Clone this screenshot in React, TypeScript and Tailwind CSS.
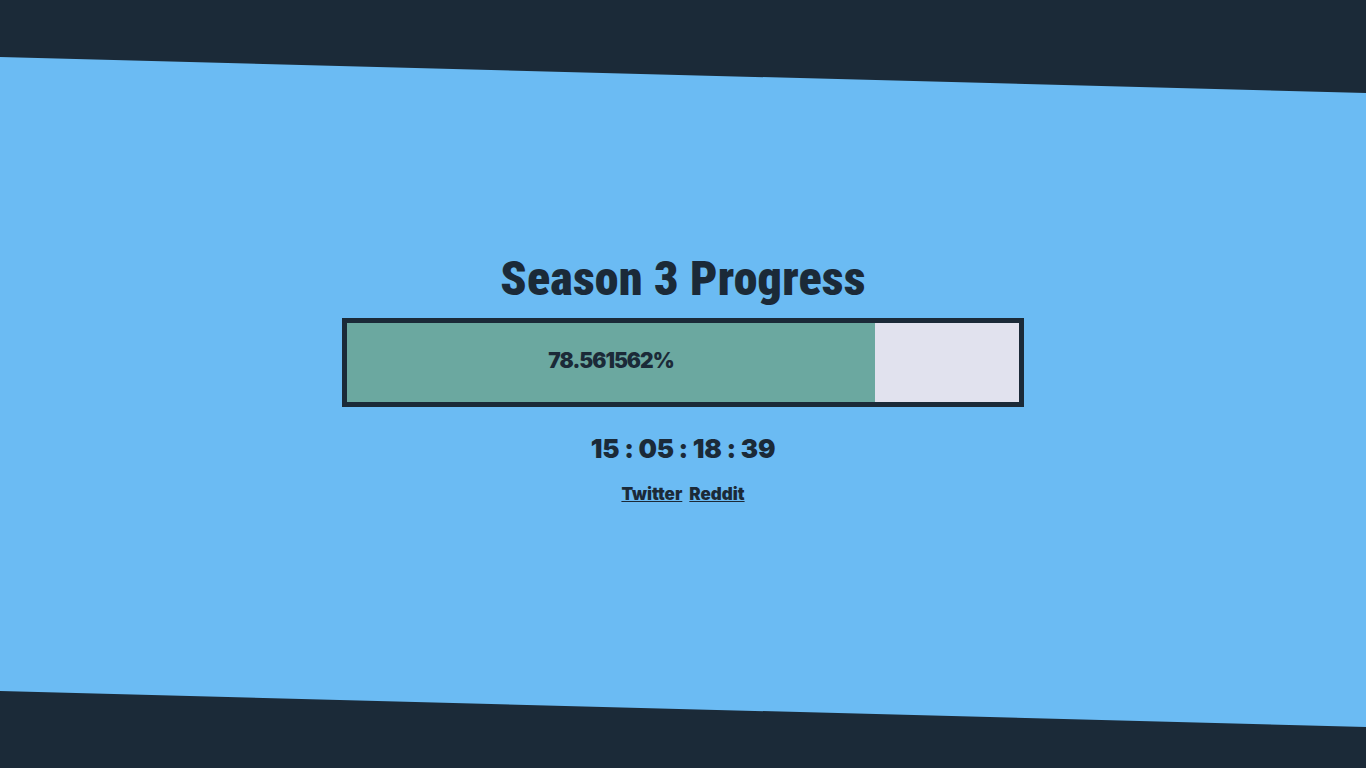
import React from "react";

export default function App() {
  const pct = 78.561562;
  return (
    <div className="relative h-[768px] w-full overflow-hidden bg-[#1b2a38] font-['Inter',sans-serif] text-[#1b2a38]">
      <div className="absolute inset-0 bg-[#6bbbf3] [clip-path:polygon(0_57px,100%_93px,100%_727px,0_691px)]" />
      <div className="relative flex flex-col items-center pt-[251px]">
        <h1 className="font-['Roboto_Condensed','Roboto',sans-serif] text-[48px] leading-[56px] font-black tracking-[0.2px]">
          Season 3 Progress
        </h1>
        <div className="mt-[11px] flex h-[89px] w-[682px] border-[5px] border-[#1b2a38] bg-[#e1e2ee]">
          <div
            className="flex h-full items-center justify-center bg-[#6ba8a0] pb-[3px]"
            style={{ width: `${pct}%` }}
          >
            <span className="text-[21px] font-black tracking-[-1px]">{pct}%</span>
          </div>
        </div>
        <div className="mt-[26px] text-[26px] leading-[32px] font-black tracking-[-0.3px]">15 : 05 : 18 : 39</div>
        <div className="mt-[17px] flex gap-[7px] text-[17px] leading-[24px] font-black">
          <a href="#" className="underline">Twitter</a>
          <a href="#" className="underline">Reddit</a>
        </div>
      </div>
    </div>
  );
}
